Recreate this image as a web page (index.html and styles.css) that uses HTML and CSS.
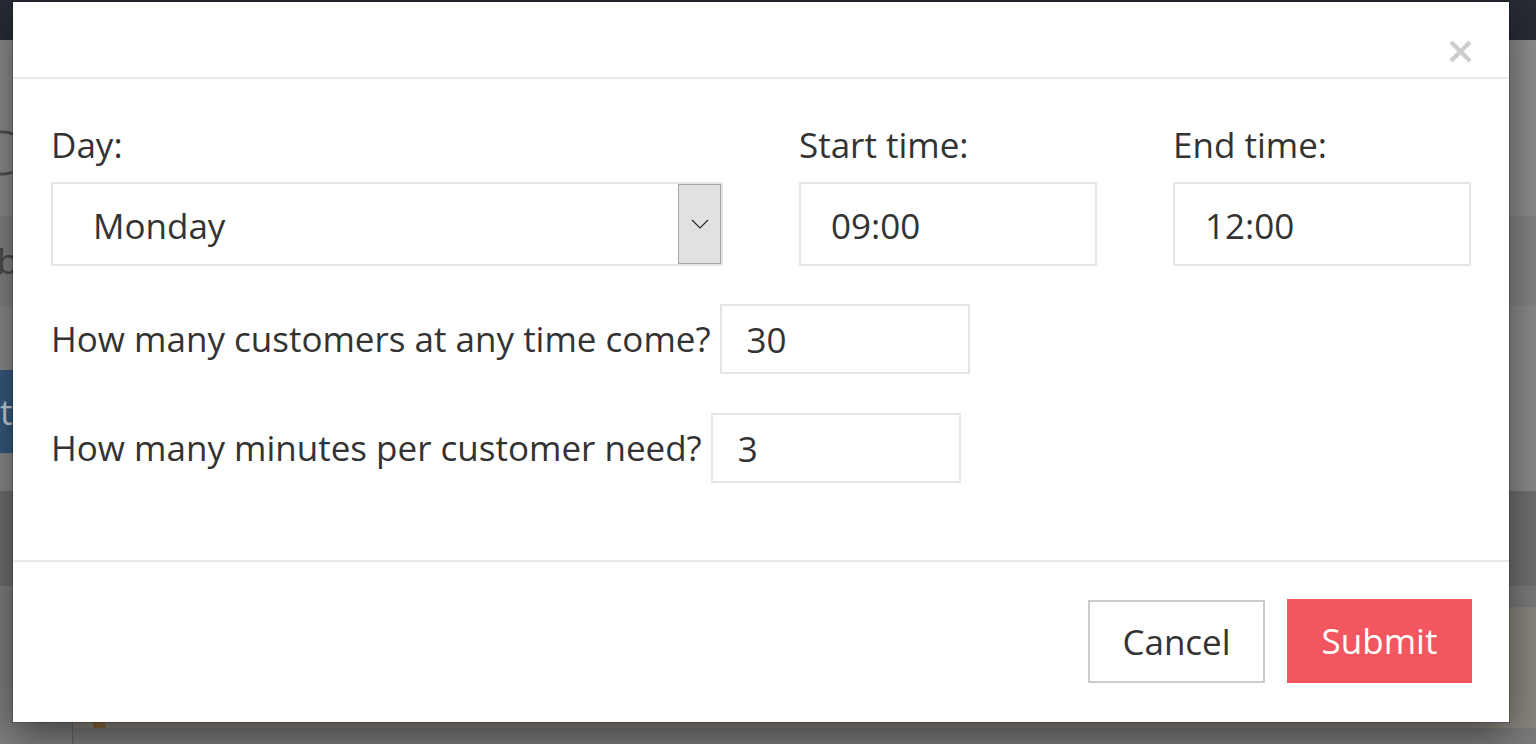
FILE: index.html
```html
<!DOCTYPE html>
<html lang="en">
<head>
<meta charset="utf-8">
<title>Schedule</title>
<link rel="stylesheet" href="styles.css">
</head>
<body>
<div class="page">
  <header class="topbar"></header>
  <section class="hero"><h1 class="hero-title">C</h1></section>
  <section class="sub"><p class="sub-text">b</p></section>
  <div class="gap-a"></div>
  <div class="btnrow"><span class="bg-btn">t</span></div>
  <div class="gap-b"></div>
  <div class="band"></div>
  <div class="lower">
    <div class="lower-side"></div>
    <div class="lower-main">
      <div class="lower-panel"><span class="lower-mark"></span></div>
    </div>
  </div>
</div>

<div class="modal">
  <div class="modal-header">
    <svg class="close" width="23" height="23" viewBox="0 0 23 23" aria-label="Close">
      <line x1="2" y1="2" x2="21" y2="21" />
      <line x1="21" y1="2" x2="2" y2="21" />
    </svg>
  </div>
  <div class="modal-body">
    <div class="top-row">
      <div class="field field-day">
        <label class="label">Day:</label>
        <div class="select">
          <span class="select-value">Monday</span>
          <span class="select-arrow">
            <svg width="18" height="10" viewBox="0 0 18 10"><polyline points="1,1 9,9 17,1" /></svg>
          </span>
        </div>
      </div>
      <div class="field field-time">
        <label class="label">Start time:</label>
        <div class="input input-lg">09:00</div>
      </div>
      <div class="field field-time">
        <label class="label">End time:</label>
        <div class="input input-lg">12:00</div>
      </div>
    </div>
    <div class="inline-row row-customers">
      <span class="inline-label">How many customers at any time come?</span>
      <div class="input input-sm">30</div>
    </div>
    <div class="inline-row row-minutes">
      <span class="inline-label">How many minutes per customer need?</span>
      <div class="input input-sm">3</div>
    </div>
  </div>
  <div class="modal-footer">
    <button class="btn btn-cancel">Cancel</button>
    <button class="btn btn-submit">Submit</button>
  </div>
</div>
</body>
</html>
```
FILE: styles.css
```css
html, body {
  margin: 0;
  padding: 0;
}
body {
  font-family: "Open Sans", "Liberation Sans", sans-serif;
  color: #333;
  background: #7a7a7a;
  overflow: hidden;
  width: 1536px;
  height: 744px;
}

/* ---------- dimmed page behind the modal ---------- */
.page {
  height: 744px;
  display: flex;
  flex-direction: column;
}
.topbar {
  height: 40px;
  background: #272c35;
}
.hero {
  height: 176px;
  background: #8c8c8c;
  overflow: hidden;
}
.hero-title {
  margin: 0 0 0 -22px;
  padding-top: 82px;
  font-size: 60px;
  line-height: 1;
  font-weight: 300;
  color: #4f4f4f;
}
.sub {
  height: 90px;
  background: #838383;
  overflow: hidden;
}
.sub-text {
  margin: 20px 0 0 -3px;
  font-size: 35px;
  line-height: 50px;
  color: #4a4a4a;
}
.gap-a {
  height: 64px;
  background: #8a8a8a;
}
.btnrow {
  height: 83px;
  background: #8a8a8a;
  display: flex;
}
.bg-btn {
  width: 200px;
  margin-left: -12px;
  background: #355b7e;
  color: #c9d2dc;
  font-size: 35px;
  line-height: 83px;
  padding-left: 12px;
}
.gap-b {
  height: 38px;
  background: #8a8a8a;
}
.band {
  height: 95px;
  background: #6f6f6f;
}
.lower {
  flex: 1;
  display: flex;
  background: #858585;
}
.lower-side {
  width: 72px;
  border-right: 1px solid #626262;
  background: #7f7f7f;
}
.lower-main {
  flex: 1;
  padding-top: 21px;
  background: #7b7b7b;
}
.lower-panel {
  height: 121px;
  background: #8a867e;
  padding-left: 20px;
  display: flex;
  align-items: flex-end;
}
.lower-mark {
  width: 12px;
  height: 6px;
  background: #8c6a3a;
}

/* ---------- modal ---------- */
.modal {
  position: absolute;
  left: 13px;
  top: 2px;
  width: 1496px;
  height: 720px;
  background: #fff;
  box-shadow: 0 0 0 1px rgba(0, 0, 0, 0.18), 0 12px 38px rgba(0, 0, 0, 0.5);
  display: flex;
  flex-direction: column;
}
.modal-header {
  height: 77px;
  box-sizing: border-box;
  border-bottom: 2px solid #e9e9e9;
  display: flex;
  justify-content: flex-end;
  padding: 38px 37px 0 0;
}
.close line {
  stroke: #cdcdcd;
  stroke-width: 4.5;
}
.modal-body {
  height: 481px;
  box-sizing: border-box;
  padding: 41px 38px 0 38px;
}
.top-row {
  display: flex;
  justify-content: space-between;
}
.field {
  display: flex;
  flex-direction: column;
}
.field-day {
  width: 672px;
}
.field-time {
  width: 298px;
}
.label {
  font-size: 35px;
  line-height: 50px;
  margin-bottom: 12px;
  color: #333;
}
.select {
  height: 84px;
  box-sizing: border-box;
  border: 2px solid #e5e5e5;
  display: flex;
  align-items: center;
}
.select-value {
  flex: 1;
  padding-left: 40px;
  padding-top: 4px;
  font-size: 35px;
  line-height: 50px;
  color: #333;
}
.select-arrow {
  align-self: stretch;
  width: 43px;
  box-sizing: border-box;
  background: #e1e1e1;
  border: 1px solid #a6a6a6;
  display: flex;
  align-items: center;
  justify-content: center;
}
.select-arrow polyline {
  fill: none;
  stroke: #2a2a2a;
  stroke-width: 1.2;
}
.input {
  box-sizing: border-box;
  border: 2px solid #e5e5e5;
  display: flex;
  align-items: center;
  font-size: 35px;
  line-height: 50px;
  color: #333;
  background: #fff;
}
.input-lg {
  height: 84px;
  padding-left: 30px;
  padding-top: 3px;
}
.input-sm {
  width: 250px;
  height: 70px;
  padding-left: 25px;
  padding-top: 1px;
}
.inline-row {
  display: flex;
  align-items: center;
}
.row-customers {
  margin-top: 38px;
}
.row-minutes {
  margin-top: 39px;
}
.inline-label {
  font-size: 35px;
  line-height: 50px;
  color: #333;
  margin-right: 9px;
}
.modal-footer {
  flex: 1;
  border-top: 2px solid #e9e9e9;
  display: flex;
  justify-content: flex-end;
  align-items: flex-start;
  gap: 22px;
  padding: 37px 37px 0 0;
}
.btn {
  font-family: "Open Sans", "Liberation Sans", sans-serif;
  font-size: 35px;
  line-height: 50px;
  height: 84px;
  box-sizing: border-box;
  padding: 0;
  margin: 0;
  cursor: pointer;
}
.btn-cancel {
  width: 177px;
  margin-top: 1px;
  height: 83px;
  background: #fff;
  border: 2px solid #cccccc;
  color: #333;
}
.btn-submit {
  width: 185px;
  background: #f25760;
  border: none;
  color: #fff;
}
```
